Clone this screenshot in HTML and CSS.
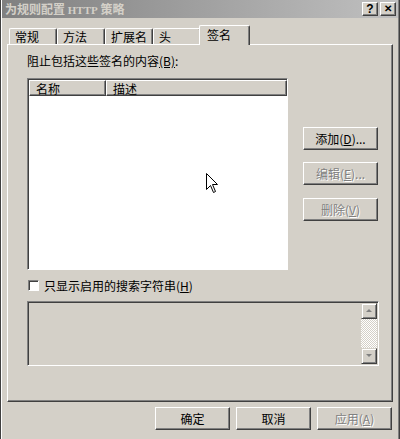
FILE: index.html
```html
<!DOCTYPE html>
<html lang="zh-CN">
<head>
  <meta charset="UTF-8">
  <title>为规则配置 HTTP 策略</title>
  <link rel="stylesheet" href="styles.css">
</head>
<body>
  <div class="ventana">
    <div class="titulo">
      <span class="titulo-texto">为规则配置 <span class="latin">HTTP</span> 策略</span>
      <div class="titulo-botones">
        <span class="btn-mini">?</span>
        <span class="btn-mini cerrar">✕</span>
      </div>
    </div>

    <div class="pestanas">
      <span class="pestana">常规</span>
      <span class="pestana">方法</span>
      <span class="pestana">扩展名</span>
      <span class="pestana">头</span>
      <span class="pestana activa">签名</span>
    </div>

    <div class="panel">
      <div class="etiqueta">阻止包括这些签名的内容<u>(B)</u>:</div>

      <div class="fila">
        <div class="lista">
          <div class="cabecera">
            <span class="col nombre">名称</span>
            <span class="col desc">描述</span>
          </div>
        </div>
        <div class="acciones">
          <button class="boton">添加(<u>D</u>)...</button>
          <button class="boton deshabilitado">编辑(<u>E</u>)...</button>
          <button class="boton deshabilitado">删除(<u>V</u>)</button>
        </div>
      </div>

      <label class="casilla">
        <span class="caja"></span>
        <span>只显示启用的搜索字符串(<u>H</u>)</span>
      </label>

      <div class="texto">
        <div class="relleno"></div>
        <div class="barra">
          <span class="flecha arriba"></span>
          <span class="pista"></span>
          <span class="flecha abajo"></span>
        </div>
      </div>
    </div>

    <div class="pie">
      <button class="boton">确定</button>
      <button class="boton">取消</button>
      <button class="boton deshabilitado">应用(<u>A</u>)</button>
    </div>

    <svg class="cursor" width="13" height="21" viewBox="0 0 13 21">
      <path d="M0.5 0.5 L0.5 16.5 L4.5 12.5 L7.5 19.5 L9.5 18.5 L6.5 11.5 L11.5 11.5 Z" fill="#fff" stroke="#000" stroke-width="1"/>
    </svg>
  </div>
</body>
</html>
```

FILE: styles.css
```css
body {
  margin: 0;
  padding: 0;
  background-color: #d4d0c8;
  font-family: "Noto Sans CJK SC", "Liberation Sans", sans-serif;
  font-size: 12px;
  color: #000;
}

u {
  text-decoration: underline;
}

.ventana {
  position: relative;
  width: 400px;
  height: 439px;
  box-sizing: border-box;
  background-color: #d4d0c8;
  border-left: 1px solid #404040;
  border-right: 1px solid #404040;
  box-shadow: inset 1px 0 #fff, inset -1px 0 #808080;
  padding: 0 1px;
}

.titulo {
  height: 18px;
  display: flex;
  align-items: center;
  justify-content: space-between;
  background: linear-gradient(to right, #808080, #c0c0c0);
  padding-left: 3px;
}

.titulo-texto {
  color: #d4d0c8;
  font-weight: bold;
  line-height: 18px;
}

.latin {
  font-family: "Liberation Serif", serif;
  font-size: 11px;
}

.titulo-botones {
  display: flex;
  gap: 2px;
  margin-right: 2px;
}

.btn-mini {
  width: 14px;
  height: 12px;
  border: 1px solid;
  border-color: #fff #404040 #404040 #fff;
  box-shadow: inset -1px -1px #808080;
  background-color: #d4d0c8;
  font-family: "Liberation Sans", sans-serif;
  font-weight: bold;
  font-size: 12px;
  line-height: 12px;
  text-align: center;
}

.cerrar {
  font-size: 10px;
}

.pestanas {
  display: flex;
  align-items: flex-end;
  height: 19px;
  margin-top: 7px;
  padding-left: 7px;
}

.pestana {
  width: 48px;
  box-sizing: border-box;
  height: 16px;
  line-height: 15px;
  padding-left: 5px;
  border-top: 1px solid #fff;
  border-left: 1px solid #fff;
  border-right: 1px solid #404040;
  box-shadow: inset -1px 0 #808080;
  border-radius: 2px 2px 0 0;
}

.activa {
  position: relative;
  height: 20px;
  width: 51px;
  padding-left: 7px;
  line-height: 18px;
  margin-left: -2px;
  margin-bottom: -1px;
  background-color: #d4d0c8;
  z-index: 1;
}

.panel {
  margin: 0 5px 0 5px;
  height: 358px;
  box-sizing: border-box;
  border: 1px solid;
  border-color: #fff #404040 #404040 #fff;
  box-shadow: inset -1px -1px #808080;
  padding: 9px 0 0 19px;
}

.etiqueta {
  line-height: 14px;
}

.fila {
  display: flex;
  gap: 15px;
  margin-top: 10px;
}

.lista {
  width: 261px;
  height: 192px;
  box-sizing: border-box;
  background-color: #fff;
  border: 1px solid;
  border-color: #808080 #fff #fff #808080;
  box-shadow: inset 1px 1px #404040;
  padding: 1px 0 0 1px;
}

.cabecera {
  display: flex;
  height: 16px;
}

.col {
  height: 16px;
  line-height: 15px;
  box-sizing: border-box;
  background-color: #d4d0c8;
  border-top: 1px solid #fff;
  border-left: 1px solid #fff;
  border-right: 1px solid #404040;
  border-bottom: 1px solid #404040;
  box-shadow: inset -1px -1px #808080;
  padding-left: 6px;
}

.nombre {
  width: 77px;
}

.desc {
  flex: 1;
}

.acciones {
  display: flex;
  flex-direction: column;
  gap: 12px;
  padding-top: 49px;
}

.boton {
  width: 75px;
  height: 23px;
  box-sizing: border-box;
  background-color: #d4d0c8;
  border: 1px solid;
  border-color: #fff #404040 #404040 #fff;
  box-shadow: inset -1px -1px #808080;
  font-family: "Noto Sans CJK SC", "Liberation Sans", sans-serif;
  font-size: 12px;
  line-height: 18px;
  padding: 0;
  color: #000;
}

.acciones .boton:nth-child(3) {
  margin-top: 1px;
}

.deshabilitado {
  color: #808080;
  text-shadow: 1px 1px #fff;
}

.casilla {
  display: flex;
  align-items: center;
  gap: 5px;
  margin-top: 9px;
  height: 13px;
  margin-left: 1px;
}

.caja {
  width: 9px;
  height: 9px;
  background-color: #fff;
  border: 1px solid;
  border-color: #808080 #fff #fff #808080;
  box-shadow: inset 1px 1px #404040;
}

.texto {
  display: flex;
  width: 352px;
  height: 65px;
  box-sizing: border-box;
  margin-top: 9px;
  background-color: #d4d0c8;
  border: 1px solid;
  border-color: #808080 #fff #fff #808080;
  box-shadow: inset 1px 1px #404040;
  padding: 1px 1px 1px 1px;
}

.relleno {
  flex: 1;
}

.barra {
  width: 16px;
  display: flex;
  flex-direction: column;
}

.flecha {
  position: relative;
  height: 16px;
  box-sizing: border-box;
  border: 1px solid;
  border-color: #d4d0c8 #404040 #404040 #d4d0c8;
  box-shadow: inset 1px 1px #fff, inset -1px -1px #808080;
}

.flecha::after {
  content: "";
  position: absolute;
  left: 4px;
  top: 5px;
  border-left: 3px solid transparent;
  border-right: 3px solid transparent;
}

.arriba::after {
  border-bottom: 3px solid #808080;
}

.abajo::after {
  border-top: 3px solid #808080;
}

.pista {
  flex: 1;
  background: repeating-conic-gradient(#fff 0 25%, #d4d0c8 0 50%) 0 0 / 2px 2px;
}

.pie {
  display: flex;
  justify-content: flex-end;
  gap: 6px;
  margin-top: 5px;
  padding-right: 6px;
}

.cursor {
  position: absolute;
  left: 205px;
  top: 173px;
}
```
